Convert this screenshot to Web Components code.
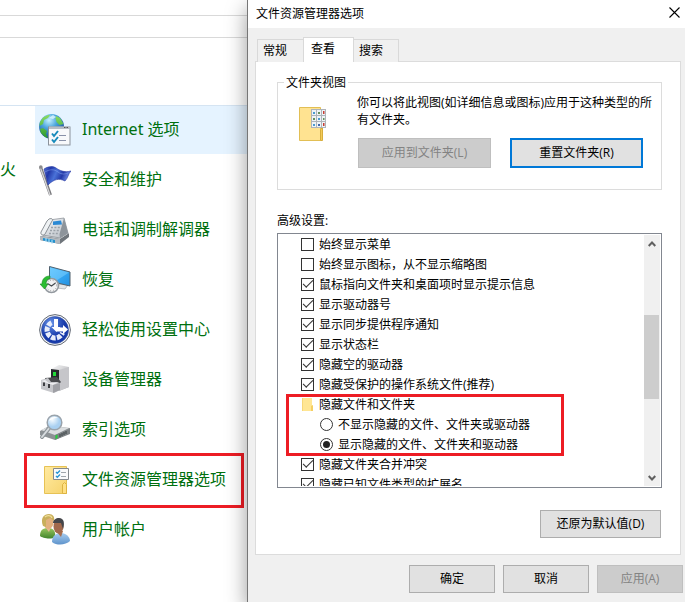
<!DOCTYPE html>
<html lang="zh-CN">
<head>
<meta charset="utf-8">
<title>文件资源管理器选项</title>
<style>
    body {
        margin: 0;
        background: #fff;
        color: #000;
        font: 12px/16px "Open Sans", "Noto Sans CJK SC", sans-serif;
    }
</style>
</head>
<body>
<options-screen></options-screen>

<script>
    // --- Icons ---

    const icons = {
        internet: `<svg viewBox="0 0 32 32">
            <defs>
                <radialGradient id="sea" cx=".4" cy=".25" r=".8"><stop offset="0" stop-color="#c8f1ff"/><stop offset=".4" stop-color="#4aa5dd"/><stop offset="1" stop-color="#123c8c"/></radialGradient>
                <linearGradient id="land" x2="0" y2="1"><stop offset="0" stop-color="#8bdc62"/><stop offset="1" stop-color="#2c9a2c"/></linearGradient>
            </defs>
            <circle cx="12.500" cy="12.500" r="12.500" fill="url(#sea)"/>
            <path d="M9 1 4 3.500 1 8l-.5 4L4 10l1-4 4-2 2-3zM17 2l4 2 3.500 6-4 1-3-3-1-4zM1 15l3-1 4 3-1 3 2 4-3-1-4-4z" fill="url(#land)"/>
            <path d="M14 1l-4 3 4 1 3-2z" fill="#dff6ff" opacity=".8"/>
            <rect x="9.500" y="13" width="21.500" height="18" fill="#f8f9fb" stroke="#8b929b"/>
            <path d="M10 12.500h21v2.500H10z" fill="#b7bdc5"/>
            <path d="M25 13.500h1.500m1 0H29" stroke="#555"/>
            <path d="M20 21.500h7M20 26.500h7" stroke="#8991a9"/>
            <path d="M13 19.500l2 2.500 4-5M13 25.500l2 2.500 4-5" fill="none" stroke="#168abb" stroke-width="2"/>
        </svg>`,
        flag: `<svg viewBox="0 0 32 32">
            <defs><linearGradient id="cloth" x2="1" y2=".3"><stop offset="0" stop-color="#5877d6"/><stop offset=".25" stop-color="#2238a8"/><stop offset=".5" stop-color="#4a72d8"/><stop offset=".75" stop-color="#2439a7"/><stop offset="1" stop-color="#7895ec"/></linearGradient></defs>
            <path d="M1.500 3l10 28" stroke="#77777b" stroke-width="3"/>
            <path d="M1.500 4l9.500 27" stroke="#d7d7d9" stroke-width="1.300"/>
            <circle cx="1.800" cy="3" r="1.800" fill="#8a8a8d"/>
            <path d="M5 5c5-3 9-3 12-1s8 5 15 3c-3 3-3 7-6 10-6-3-11-2-17 4z" fill="url(#cloth)" stroke="#2132a0" stroke-width=".6"/>
            <path d="M6 8c5-3 9-3 13 0s7 2 10 1" fill="none" stroke="#8ba8f1" opacity=".5"/>
        </svg>`,
        phone: `<svg viewBox="0 0 32 32">
            <defs><linearGradient id="body" x2="1" y2="1"><stop offset="0" stop-color="#f7f9fb"/><stop offset="1" stop-color="#b4bac1"/></linearGradient></defs>
            <path d="M1 22l21 2 8-5v4l-9 7-20-4z" fill="#6f757b"/>
            <path d="M1 21l10-3 19 1-9 6z" fill="#d6dadd"/>
            <path d="M1 22l20 3v5L1 26z" fill="#b5babf"/>
            <path d="M4 24l12 2v3L4 26.500z" fill="#2591cd"/>
            <path d="M7 24v4m3-3v4m3-3v4" stroke="#b9e8ff"/>
            <path d="M10 6l15-2 4 15-8 5-17-3z" fill="url(#body)" stroke="#858b92" stroke-width=".7"/>
            <path d="M25 4l4 15-8 5-.5-4z" fill="#8d949b"/>
            <path d="M14 7.500l8-1 1 4-9 .5z" fill="#2b89d4"/>
            <path d="M12 13.500h10m-11 3h10m-11 3h10" stroke="#9aa1a8" stroke-width="1.400" stroke-dasharray="2 1.400"/>
            <path d="M10 5c2-1 5 0 3 2L6 20c-1 2-5 1-4-2L8 7z" fill="#eff2f4" stroke="#71777e" stroke-width=".8"/>
        </svg>`,
        recovery: `<svg viewBox="0 0 32 32">
            <defs><linearGradient id="screen" x2="1" y2="1"><stop offset="0" stop-color="#55c1ff"/><stop offset=".5" stop-color="#36a8f4"/><stop offset="1" stop-color="#2390df"/></linearGradient></defs>
            <path d="M18 20l11 1-3 4-8-1z" fill="#e3e6e8" stroke="#969ca2" stroke-width=".6"/>
            <path d="M10.500 2.500l20.500 5.500v14L10.500 17z" fill="url(#screen)" stroke="#50606d"/>
            <path d="M11 3.500l19 5-14 9-5-1z" fill="#8ed9ff" opacity=".45"/>
            <circle cx="12.500" cy="21.500" r="7" fill="#f2f3f4" stroke="#93999f" stroke-width="1.600"/>
            <circle cx="12.500" cy="21.500" r="5.200" fill="none" stroke="#777" stroke-width=".8" stroke-dasharray=".8 2"/>
            <path d="M8.500 19.500l4 2.500 4-3" fill="none" stroke="#454b50" stroke-width="1.200"/>
            <path d="M11 12c-5 0-8 3-8 8H1l4.500 5L9 20H7c0-3 1-5 4-5.500z" fill="#2bbd32" stroke="#198a21" stroke-width=".6"/>
        </svg>`,
        ease: `<svg viewBox="0 0 32 32">
            <defs><radialGradient id="disc" cx=".35" cy=".25"><stop offset="0" stop-color="#6793e8"/><stop offset="1" stop-color="#173aaa"/></radialGradient></defs>
            <circle cx="16" cy="16" r="15.400" fill="#f4f4f6" stroke="#626974"/>
            <circle cx="16" cy="16" r="13.500" fill="url(#disc)" stroke="#3450a0" stroke-width=".6"/>
            <path d="M12.500 8.800a8 8 0 1 0 11 10" fill="none" stroke="#e8edfa" stroke-width="5" stroke-dasharray="4.500 1.300"/>
            <path d="M15 5h4v8h2.500l-4 5-5-5H15z" fill="#fff"/>
            <path d="M18 13.500h6V11l5 4.500-5 4.500v-2.500h-6z" fill="#fff"/>
        </svg>`,
        device: `<svg viewBox="0 0 32 32">
            <defs><linearGradient id="case" x2="1" y2="1"><stop offset="0" stop-color="#f9f9fa"/><stop offset="1" stop-color="#a3a4a8"/></linearGradient></defs>
            <path d="M12 5l8-4 10 2v20l-10 4-8-5z" fill="url(#case)"/>
            <path d="M20 6l10-3v20l-10 4z" fill="#c6c6ca"/>
            <path d="M12 5l8 1v15l-8-1z" fill="#27292c"/>
            <path d="M14 8h3v4h-3z" fill="#22db39"/>
            <path d="M6 14l12-1 4 5-5 5H7z" fill="#494b4e"/>
            <path d="M2 16l7-2 3 4h5l4 1v7l-6 3-13-4z" fill="#c5c6ca"/>
            <path d="M2 17l4-1 4 3h5l5-1-6 3z" fill="#ededf0"/>
            <path d="M14 21l7-2v7l-7 3z" fill="#9fa0a5"/>
            <path d="M5 18.500v3.500m5-2v4" stroke="#3d3e42" stroke-width="2"/>
        </svg>`,
        index: `<svg viewBox="0 0 32 32">
            <defs><radialGradient id="lens" cx=".35" cy=".3"><stop offset="0" stop-color="#f7fcff"/><stop offset="1" stop-color="#a9d0f1"/></radialGradient></defs>
            <path d="M1 17l9-5 21 2v5l-15 7-15-5z" fill="#8d9295"/>
            <path d="M2 16l9-4 19 2-14 7z" fill="#dcdfe1"/>
            <path d="M16 21l15-6v5l-15 6z" fill="#7d8285"/>
            <path d="M16.500 21.500l2-.7v3.500l-2 .7z" fill="#23d53a"/>
            <path d="M21 20v3m2-4v3m2-4v3m2-4v3" stroke="#3d4244"/>
            <path d="M11 13L3 23" stroke="#8b9296" stroke-width="4" stroke-linecap="round"/>
            <path d="M11 13L3 23" stroke="#d8dcdf" stroke-width="2" stroke-linecap="round"/>
            <circle cx="15.500" cy="8.500" r="7.300" fill="url(#lens)" stroke="#9aa3ab" stroke-width="1.500"/>
            <path d="M10 7c1-4 6-5 9-3-4 0-6 1-9 3z" fill="#fff"/>
        </svg>`,
        options: `<svg viewBox="0 0 32 32">
            <defs><linearGradient id="paper" x2="1" y2="1"><stop offset="0" stop-color="#ffeaa1"/><stop offset="1" stop-color="#f6d36c"/></linearGradient></defs>
            <path d="M5.500 2.500h22v27h-22z" fill="url(#paper)" stroke="#e7c255"/>
            <path d="M23.500 29.500v-9l2-2 2 2v9z" fill="#ffe084" stroke="#ddb442"/>
            <path d="M14.500 4.500h15v11h-15z" fill="#fafafa" stroke="#85898d"/>
            <path d="M22 8.500h5M22 12.500h5" stroke="#a0a6ab"/>
            <path d="M17 8l1.300 1.300L21 6.500M17 12l1.300 1.300 2.700-2.800" fill="none" stroke="#2896d4" stroke-width="1.400"/>
        </svg>`,
        users: `<svg viewBox="0 0 32 32">
            <defs>
                <linearGradient id="green" x2="0" y2="1"><stop offset="0" stop-color="#98c65f"/><stop offset="1" stop-color="#42852c"/></linearGradient>
                <linearGradient id="blue" x2="0" y2="1"><stop offset="0" stop-color="#a8cdf0"/><stop offset="1" stop-color="#5e93cb"/></linearGradient>
            </defs>
            <path d="M1 22c0-6 3-8 8-8s8 3 7 9c-4 3-13 1-15-1z" fill="url(#green)"/>
            <path d="M6 13h6l-2 5z" fill="#e7b590"/>
            <ellipse cx="9.500" cy="8" rx="5" ry="7" fill="#e2b07e"/>
            <path d="M4 12C1 4 5 0 10 0c4 0 6 3 5 7l-4-3-4 2v7z" fill="#c9af5c"/>
            <path d="M6 3c2-2 6-2 7 1" fill="none" stroke="#efdf9a" stroke-width="1.300"/>
            <path d="M13 28c0-6 4-9 9-9s9 4 9 8c-4 4-13 5-18 1z" fill="url(#blue)"/>
            <path d="M17 17h7l-2 6z" fill="#a87050"/>
            <ellipse cx="19.500" cy="12.500" rx="5" ry="7" fill="#a2694c"/>
            <path d="M14 9c0-3 3-5 6-5 5 0 6 5 4 11l-2-6z" fill="#45464a"/>
        </svg>`,
        view: `<svg viewBox="0 0 28 36">
            <path d="M.500 1.500h21v33H.500z" fill="#ffe391" stroke="#e2bf55"/>
            <path d="M21.500 34.500v-11l2-2v13z" fill="#f3cb58" stroke="#d7ad3c"/>
            <path d="M12 3h15v19H12z" fill="#aeb4b9"/>
            <path d="M13 4h4v5h-4zm5 0h4v5h-4zm5 0h3v5h-3zM13 10h4v5h-4zm5 0h4v5h-4zm5 0h3v5h-3zM13 16h4v5h-4zm5 0h4v5h-4zm5 0h3v5h-3z" fill="#eef3f6"/>
            <path d="M14 6h2v2h-2zm5 6h2v2h-2zm-5 6h2v2h-2z" fill="#4b9bcf"/>
            <path d="M19 6h2v2h-2zm5 6h1.500v2H24zm-10 0h2v2h-2z" fill="#65915b"/>
            <path d="M24 5h1.500v3H24zm0 12h1.500v3H24z" fill="#c73c32"/>
            <path d="M19 18h2v2h-2z" fill="#4268ab"/>
        </svg>`,
        folder: `<svg viewBox="0 0 12 13">
            <path d="M0 0h10v13H0z" fill="#ffe694"/><path d="M9 8l2-1v6H9z" fill="#f5cf62"/><path d="M0 0h1v13H0z" fill="#f7d778"/>
        </svg>`,
        close: `<svg viewBox="0 0 11 11"><path d="M.500.500l10 10m0-10l-10 10" fill="none" stroke="#000" stroke-width="1.100"/></svg>`,
        up: `<svg viewBox="0 0 8 6"><path d="M.700 5L4 1.500 7.300 5" fill="none" stroke="#606060" stroke-width="2"/></svg>`,
        down: `<svg viewBox="0 0 8 6"><path d="M.700 1L4 4.500 7.300 1" fill="none" stroke="#606060" stroke-width="2"/></svg>`
    };

    // --- Data ---

    const panelItems = [
        { icon: 'internet', text: 'Internet 选项', state: 'selected' },
        { icon: 'flag', text: '安全和维护' },
        { icon: 'phone', text: '电话和调制解调器' },
        { icon: 'recovery', text: '恢复' },
        { icon: 'ease', text: '轻松使用设置中心' },
        { icon: 'device', text: '设备管理器' },
        { icon: 'index', text: '索引选项' },
        { icon: 'options', text: '文件资源管理器选项', state: 'marked' },
        { icon: 'users', text: '用户帐户' }
    ];

    const checksBefore = [
        ['始终显示菜单', false],
        ['始终显示图标，从不显示缩略图', false],
        ['鼠标指向文件夹和桌面项时显示提示信息', true],
        ['显示驱动器号', true],
        ['显示同步提供程序通知', true],
        ['显示状态栏', true],
        ['隐藏空的驱动器', true],
        ['隐藏受保护的操作系统文件(推荐)', true]
    ];

    const checksAfter = [
        ['隐藏文件夹合并冲突', true],
        ['隐藏已知文件类型的扩展名', true]
    ];

    const checkRows = rows => rows.map(([text, on]) =>
        `<option-row type="checkbox" ${on ? 'checked' : ''}>${text}</option-row>`).join('');

    // --- Elements ---

    class BaseElement extends HTMLElement {
        connectedCallback() {
            if (this.shadowRoot) return;
            this.attachShadow({ mode: 'open' });
            this.shadowRoot.innerHTML = `<style>*, *::after { box-sizing: border-box; }</style>${this.render()}`;
            this.ready();
        }
        ready() {}
    }

    class UiIcon extends BaseElement {
        render() {
            return `
                <style>
                    :host { display: block; flex: none; width: 32px; height: 32px; }
                    svg { display: block; width: 100%; height: 100%; }
                </style>
                ${icons[this.getAttribute('name')]}
            `;
        }
    }

    class PanelItem extends BaseElement {
        render() {
            return `
                <style>
                    :host { display: block; position: relative; }
                    a {
                        display: flex; align-items: center; gap: 11px; height: 48px; padding-left: 4px;
                        color: #00700f; font-family: "Noto Sans", "Noto Sans CJK SC", sans-serif;
                        font-size: 16px; line-height: 24px; text-decoration: none; white-space: nowrap;
                    }
                    span { padding-bottom: 2px; }
                    :host([state="selected"]) a { background: #e5f3ff; }
                    /* red frame round the entry */
                    :host([state="marked"])::after {
                        content: ""; position: absolute; inset: -3px 3px -4px -11px;
                        border: 3px solid #ed1c24; pointer-events: none;
                    }
                </style>
                <a href="#"><ui-icon name="${this.getAttribute('icon')}"></ui-icon><span><slot></slot></span></a>
            `;
        }
    }

    class ControlPanel extends BaseElement {
        render() {
            return `
                <style>
                    :host { display: flex; flex-direction: column; overflow: hidden; }
                    .bar { height: 16px; border-bottom: 1px solid #d9d9d9; }
                    .address { height: 22px; }
                    .head { height: 68px; border-bottom: 1px solid #d5e4f2; }
                    .columns { display: flex; }
                    .previous { width: 35px; padding-top: 51px; color: #00700f; font-size: 16px; line-height: 24px; }
                    nav { flex: 1; display: flex; flex-direction: column; gap: 2px; min-width: 0; }
                </style>
                <div class="bar"></div>
                <div class="bar address"></div>
                <div class="head"></div>
                <div class="columns">
                    <div class="previous">火</div>
                    <nav>${panelItems.map(item => `
                        <panel-item icon="${item.icon}" state="${item.state || ''}">${item.text}</panel-item>`).join('')}
                    </nav>
                </div>
            `;
        }
    }

    class PushButton extends BaseElement {
        render() {
            return `
                <style>
                    :host { display: block; height: 28px; }
                    button {
                        width: 100%; height: 100%; padding: 0; border: 1px solid #adadad; border-radius: 0;
                        background: #e1e1e1; color: #000; font: inherit; white-space: nowrap;
                    }
                    :host([focused]) button { border: 2px solid #0078d7; }
                    button:disabled { border-color: #bfbfbf; background: #ccc; color: #838383; }
                </style>
                <button type="button" ${this.hasAttribute('disabled') ? 'disabled' : ''}><slot></slot></button>
            `;
        }
    }

    class TabStrip extends BaseElement {
        render() {
            return `
                <style>
                    :host { display: flex; align-items: flex-end; padding-left: 2px; height: 25px; }
                    button {
                        width: 46px; height: 23px; margin: 0; padding: 0 0 0 5px; text-align: left;
                        border: 1px solid #d9d9d9; border-width: 1px 0 0 1px; border-radius: 0;
                        background: #f0f0f0; color: #000; font: inherit;
                    }
                    button:last-child { width: 45px; border-width: 1px 1px 0 0; }
                    button[aria-selected="true"] {
                        width: 51px; height: 25px; padding: 0 0 2px 7px; border-width: 1px 1px 0; background: #fff;
                    }
                </style>
                <button role="tab" aria-selected="false">常规</button>
                <button role="tab" aria-selected="true">查看</button>
                <button role="tab" aria-selected="false">搜索</button>
            `;
        }
    }

    class OptionRow extends BaseElement {
        render() {
            const type = this.getAttribute('type');
            return `
                <style>
                    :host { display: flex; flex: none; align-items: center; height: 20px; padding-left: 23px; gap: 5px; white-space: nowrap; }
                    :host([type="radio"]) { padding-left: 42px; }
                    input {
                        appearance: none; display: grid; place-items: center; flex: none;
                        width: 13px; height: 13px; margin: 0; border: 1px solid #333; background: #fff;
                    }
                    label { padding-top: 2px; }
                    input[type="radio"] { border-radius: 50%; }
                    input[type="radio"]:checked::after { content: ""; width: 7px; height: 7px; border-radius: 50%; background: #222; }
                    input[type="checkbox"]:checked::after {
                        content: ""; width: 10px; height: 5px; margin-bottom: 3px;
                        border: solid #333; border-width: 0 0 1px 1px; transform: rotate(-45deg);
                    }
                </style>
                <input id="box" type="${type}" ${this.hasAttribute('checked') ? 'checked' : ''}>
                <label for="box"><slot></slot></label>
            `;
        }
        ready() {
            // radios sit in separate roots, so the group is kept by hand
            const input = this.shadowRoot.querySelector('input');
            input.addEventListener('change', () => {
                if (input.type !== 'radio') return;
                this.parentNode.querySelectorAll('option-row[type="radio"]').forEach(row => {
                    if (row !== this) row.shadowRoot.querySelector('input').checked = false;
                });
            });
        }
    }

    class ScrollTrack extends BaseElement {
        render() {
            return `
                <style>
                    :host { display: flex; flex-direction: column; align-items: center; width: 16px; background: #f0f0f0; }
                    button { display: grid; place-items: center; width: 16px; height: 17px; padding: 0; border: 0; background: none; }
                    ui-icon { width: 8px; height: 6px; }
                    .lane { flex: 1; display: flex; flex-direction: column; align-self: stretch; }
                    .above { flex: 63; }
                    .thumb { flex: 84; margin-right: 1px; background: #cdcdcd; }
                    .below { flex: 70; }
                </style>
                <button aria-label="向上"><ui-icon name="up"></ui-icon></button>
                <div class="lane"><div class="above"></div><div class="thumb"></div><div class="below"></div></div>
                <button aria-label="向下"><ui-icon name="down"></ui-icon></button>
            `;
        }
    }

    class AdvancedList extends BaseElement {
        render() {
            return `
                <style>
                    :host { display: flex; border: 1px solid #828790; padding-bottom: 1px; }
                    .rows { flex: 1; display: flex; flex-direction: column; min-width: 0; overflow: hidden; }
                    .node { display: flex; align-items: center; gap: 5px; height: 20px; padding-left: 24px; }
                    .node ui-icon { width: 12px; height: 13px; }
                    .node span { padding-top: 2px; }
                    .group { flex: none; position: relative; }
                    .group::after {
                        content: ""; position: absolute; top: 0; left: 8px; width: 278px; height: 62px;
                        border: 3px solid #ed1c24; pointer-events: none;
                    }
                    scroll-track { margin: 1px 1px 0 0; }
                </style>
                <div class="rows">
                    ${checkRows(checksBefore)}
                    <div class="group">
                        <div class="node"><ui-icon name="folder"></ui-icon><span>隐藏文件和文件夹</span></div>
                        <option-row type="radio">不显示隐藏的文件、文件夹或驱动器</option-row>
                        <option-row type="radio" checked>显示隐藏的文件、文件夹和驱动器</option-row>
                    </div>
                    ${checkRows(checksAfter)}
                </div>
                <scroll-track></scroll-track>
            `;
        }
    }

    class FolderViews extends BaseElement {
        render() {
            return `
                <style>
                    :host { display: block; }
                    fieldset { min-width: 0; margin: 0; padding: 0 8px 21px 21px; border: 1px solid #dcdcdc; }
                    legend { margin-left: -15px; padding: 2px 2px 0; line-height: 16px; }
                    .content { display: flex; gap: 30px; padding-top: 3px; }
                    ui-icon { width: 28px; height: 36px; margin-top: 12px; }
                    p { margin: 0; line-height: 17px; }
                    .text { flex: 1; min-width: 0; }
                    .buttons { display: flex; gap: 19px; padding: 10px 10px 0 1px; }
                    push-button { flex: 1; height: 30px; }
                </style>
                <fieldset>
                    <legend>文件夹视图</legend>
                    <div class="content">
                        <ui-icon name="view"></ui-icon>
                        <div class="text">
                            <p>你可以将此视图(如详细信息或图标)应用于这种类型的所有文件夹。</p>
                            <div class="buttons">
                                <push-button disabled>应用到文件夹(L)</push-button>
                                <push-button focused>重置文件夹(R)</push-button>
                            </div>
                        </div>
                    </div>
                </fieldset>
            `;
        }
    }

    class OptionsDialog extends BaseElement {
        render() {
            return `
                <style>
                    :host {
                        display: flex; flex-direction: column; min-width: 0; position: relative;
                        border-left: 1px solid #767676; background: #f0f0f0; box-shadow: 0 8px 20px rgba(0, 0, 0, .4);
                    }
                    header { display: flex; align-items: center; justify-content: space-between; height: 28px; padding: 0 5px 0 8px; background: #fff; }
                    h1 { margin: 0; font: inherit; }
                    header button { display: grid; align-self: flex-start; margin-top: 7px; padding: 0; border: 0; background: none; }
                    header ui-icon { width: 11px; height: 11px; }
                    tab-strip { margin: 9px 0 -1px 7px; position: relative; z-index: 1; }
                    main {
                        flex: 1; display: flex; flex-direction: column; min-height: 0;
                        margin: 0 4px 0 7px; padding: 11px 18px 16px 21px; border: 1px solid #dcdcdc; background: #fff;
                    }
                    .caption { margin: 23px 0 4px; }
                    advanced-list { flex: 1 1 0; min-height: 120px; }
                    .restore { align-self: flex-end; width: 121px; margin: 22px 1px 0 0; }
                    footer { display: flex; justify-content: flex-end; gap: 8px; padding: 10px 2px 9px; }
                    footer push-button { width: 86px; }
                </style>
                <header>
                    <h1>文件资源管理器选项</h1>
                    <button aria-label="关闭"><ui-icon name="close"></ui-icon></button>
                </header>
                <tab-strip role="tablist"></tab-strip>
                <main>
                    <folder-views></folder-views>
                    <div class="caption">高级设置:</div>
                    <advanced-list></advanced-list>
                    <push-button class="restore">还原为默认值(D)</push-button>
                </main>
                <footer>
                    <push-button>确定</push-button>
                    <push-button>取消</push-button>
                    <push-button disabled>应用(A)</push-button>
                </footer>
            `;
        }
    }

    class OptionsScreen extends BaseElement {
        render() {
            return `
                <style>
                    :host { display: flex; height: 100vh; overflow: hidden; }
                    control-panel { flex: 0 0 247px; }
                    options-dialog { flex: 1; }
                </style>
                <control-panel></control-panel>
                <options-dialog></options-dialog>
            `;
        }
    }

    customElements.define('ui-icon', UiIcon);
    customElements.define('panel-item', PanelItem);
    customElements.define('control-panel', ControlPanel);
    customElements.define('push-button', PushButton);
    customElements.define('tab-strip', TabStrip);
    customElements.define('option-row', OptionRow);
    customElements.define('scroll-track', ScrollTrack);
    customElements.define('advanced-list', AdvancedList);
    customElements.define('folder-views', FolderViews);
    customElements.define('options-dialog', OptionsDialog);
    customElements.define('options-screen', OptionsScreen);
</script>
</body>
</html>
